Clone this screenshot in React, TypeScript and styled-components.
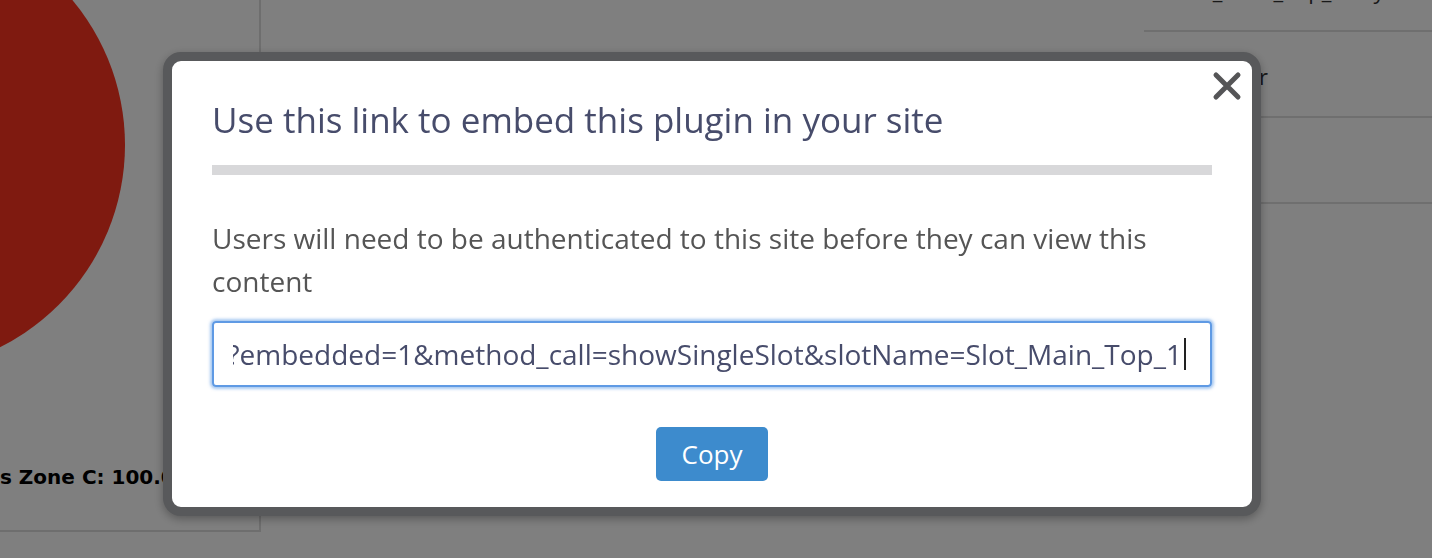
import React from 'react'
import styled, { createGlobalStyle } from 'styled-components'

const GlobalStyle = createGlobalStyle`
  *, *::before, *::after {
    box-sizing: border-box;
  }
  html, body {
    margin: 0;
    padding: 0;
    height: 100%;
    overflow: hidden;
  }
  body {
    font-family: 'Open Sans', 'Liberation Sans', sans-serif;
    background: #ffffff;
  }
`

const Page = styled.div`
  display: flex;
  height: 558px;
  background: #ffffff;
  overflow: hidden;
`

const ChartPanel = styled.div`
  width: 261px;
  height: 532px;
  border-right: 2px solid #dcdcdc;
  border-bottom: 2px solid #dcdcdc;
  display: flex;
  flex-direction: column;
  overflow: hidden;
`

const Pie = styled.svg`
  display: block;
  flex: none;
`

const Legend = styled.div`
  margin-top: 65px;
  font-family: 'DejaVu Sans', Verdana, sans-serif;
  font-weight: bold;
  font-size: 20px;
  color: #000;
  white-space: nowrap;
`

const Middle = styled.div`
  flex: 1;
`

const SideList = styled.ul`
  list-style: none;
  margin: -54px 0 0;
  padding: 0;
  width: 288px;
  flex: none;
`

const SideItem = styled.li<{ $indent: number }>`
  height: 86px;
  display: flex;
  align-items: center;
  padding: 4px 0 0 ${p => p.$indent}px;
  border-bottom: 2px solid #dedede;
  font-size: 22px;
  color: #333;
  white-space: nowrap;
`

const Overlay = styled.div`
  position: fixed;
  inset: 0;
  background: rgba(0, 0, 0, 0.5);
  display: flex;
  align-items: flex-start;
  padding: 52px 0 0 163px;
`

const Modal = styled.div`
  position: relative;
  width: 1098px;
  background: #fff;
  border: 9px solid #58595b;
  border-radius: 18px;
  box-shadow: 0 3px 10px rgba(0, 0, 0, 0.3);
  display: flex;
  flex-direction: column;
  padding: 35px 40px 26px;
`

const CloseButton = styled.button`
  position: absolute;
  top: 10px;
  right: 10px;
  width: 30px;
  height: 30px;
  padding: 0;
  border: none;
  background: transparent;
  cursor: pointer;
`

const Title = styled.h2`
  margin: 0;
  font-size: 35px;
  line-height: 48px;
  font-weight: normal;
  color: #474c6b;
`

const Divider = styled.div`
  height: 10px;
  background: #d8d8da;
  margin-top: 21px;
`

const Message = styled.p`
  margin: 42px 0 0;
  font-size: 28px;
  line-height: 43px;
  color: #555;
`

const LinkField = styled.div`
  margin-top: 18px;
  height: 66px;
  border: 2px solid #5f9ae4;
  border-radius: 4px;
  box-shadow: 0 0 3px 2px rgba(95, 154, 228, 0.55);
  display: flex;
  align-items: center;
  padding: 0 24px 0 19px;
`

const LinkText = styled.div`
  flex: 1;
  display: flex;
  align-items: center;
  justify-content: flex-end;
  overflow: hidden;
  font-size: 28px;
  color: #474c6b;
  white-space: nowrap;
`

const Caret = styled.span`
  display: inline-block;
  width: 2px;
  height: 32px;
  margin-left: 2px;
  background: #222;
  flex: none;
`

const CopyButton = styled.button`
  align-self: center;
  margin-top: 40px;
  width: 112px;
  height: 54px;
  border: none;
  border-radius: 5px;
  background: #3d8bcd;
  color: #fff;
  font-family: 'Open Sans', 'Liberation Sans', sans-serif;
  font-size: 26px;
  cursor: pointer;
`

const link =
  'https://portal.example.com/plugins/viz?embedded=1&method_call=showSingleSlot&slotName=Slot_Main_Top_1'

export default function App() {
  return (
    <>
      <GlobalStyle />
      <Page>
        <ChartPanel>
          <Pie width="259" height="400" viewBox="0 0 259 400">
            <circle cx="-101" cy="145" r="226" fill="#fe3420" />
          </Pie>
          <Legend>s Zone C: 100.0%</Legend>
        </ChartPanel>
        <Middle />
        <SideList>
          <SideItem $indent={30}>Slot_Main_Top_1 Layout</SideItem>
          <SideItem $indent={46}>Sidebar</SideItem>
          <SideItem $indent={30}>Footer</SideItem>
        </SideList>
      </Page>
      <Overlay>
        <Modal>
          <CloseButton aria-label="Close">
            <svg width="30" height="30" viewBox="0 0 30 30">
              <path
                d="M4 4 L26 26 M26 4 L4 26"
                stroke="#555557"
                strokeWidth="5"
                strokeLinecap="round"
              />
            </svg>
          </CloseButton>
          <Title>Use this link to embed this plugin in your site</Title>
          <Divider />
          <Message>
            Users will need to be authenticated to this site before they can view this content
          </Message>
          <LinkField role="textbox" aria-readonly="true">
            <LinkText>
              <span>{link}</span>
              <Caret />
            </LinkText>
          </LinkField>
          <CopyButton>Copy</CopyButton>
        </Modal>
      </Overlay>
    </>
  )
}
